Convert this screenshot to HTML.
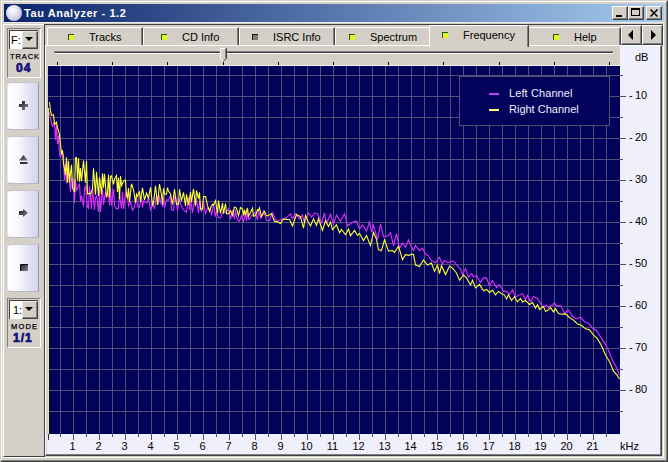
<!DOCTYPE html>
<html><head><meta charset="utf-8">
<style>
*{margin:0;padding:0;box-sizing:border-box}
html,body{width:668px;height:462px;overflow:hidden;background:#D4D0C8;font-family:"Liberation Sans",sans-serif;font-size:11px;color:#000}
.a{position:absolute}
.t{position:absolute;white-space:nowrap;line-height:13px}
</style></head><body>
<!-- window frame -->
<div class="a" style="left:0;top:0;width:668px;height:462px;border-top:1px solid #D4D0C8;border-left:1px solid #D4D0C8;border-right:1px solid #404040;border-bottom:1px solid #404040"></div>
<div class="a" style="left:1px;top:1px;width:666px;height:460px;border-top:1px solid #FFF;border-left:1px solid #FFF;border-right:1px solid #808080;border-bottom:1px solid #808080"></div>
<!-- title bar -->
<div class="a" style="left:4px;top:4px;width:660px;height:18px;background:linear-gradient(to right,#0A246A 0%,#A6CAF0 100%)"></div>
<div class="a" style="left:6px;top:5px;width:16px;height:16px;border-radius:50%;background:radial-gradient(circle at 40% 35%,#FFFFFF 0%,#E4E4F4 35%,#B8B8D8 80%,#9898C0 100%)"></div>
<div class="t" style="left:24px;top:7px;color:#fff;font-weight:bold;font-size:11px;letter-spacing:0.56px">Tau Analyzer - 1.2</div>
<!-- caption buttons -->
<div class="a" style="left:612px;top:6px;width:16px;height:14px;background:#D4D0C8;border-top:1px solid #fff;border-left:1px solid #fff;border-right:1px solid #404040;border-bottom:1px solid #404040;box-shadow:inset -1px -1px 0 #808080"></div>
<div class="a" style="left:616px;top:15px;width:6px;height:2px;background:#000"></div>
<div class="a" style="left:628px;top:6px;width:16px;height:14px;background:#D4D0C8;border-top:1px solid #fff;border-left:1px solid #fff;border-right:1px solid #404040;border-bottom:1px solid #404040;box-shadow:inset -1px -1px 0 #808080"></div>
<div class="a" style="left:631px;top:8px;width:9px;height:8px;border:1px solid #000;border-top-width:2px"></div>
<div class="a" style="left:646px;top:6px;width:16px;height:14px;background:#D4D0C8;border-top:1px solid #fff;border-left:1px solid #fff;border-right:1px solid #404040;border-bottom:1px solid #404040;box-shadow:inset -1px -1px 0 #808080"></div>
<svg class="a" style="left:646px;top:6px" width="16" height="14"><path d="M4.5 3.5 L11.5 10.5 M11.5 3.5 L4.5 10.5" stroke="#000" stroke-width="1.6"/></svg>

<!-- left panel -->
<div class="a" style="left:3px;top:24px;width:41px;height:433px;border-top:1px solid #fff;border-left:1px solid #fff;border-bottom:1px solid #404040"></div>
<div class="a" style="left:4px;top:22px;width:660px;height:1px;background:#ECECEC"></div>
<!-- group 1 -->
<div class="a" style="left:7px;top:28px;width:34px;height:50px;border-top:1px solid #808080;border-left:1px solid #808080;border-right:1px solid #fff;border-bottom:1px solid #fff"></div>
<div class="a" style="left:9px;top:30px;width:29px;height:19px;background:#fff;border-top:1px solid #404040;border-left:1px solid #404040"></div>
<div class="t" style="left:11px;top:34px">F:</div>
<div class="a" style="left:22px;top:31px;width:16px;height:18px;background:#D4D0C8;border-top:1px solid #E8E6E0;border-left:1px solid #E8E6E0;border-right:1px solid #404040;border-bottom:1px solid #404040;box-shadow:inset -1px -1px 0 #808080"></div>
<svg class="a" style="left:25px;top:37px" width="9" height="5"><path d="M0 0 H8 L4 4 Z" fill="#000"/></svg>
<div class="t" style="left:10px;top:50px;font-size:7.5px;letter-spacing:0.9px;-webkit-text-stroke:0.25px #000">TRACK</div>
<div class="t" style="left:16px;top:62px;font-size:12px;font-weight:bold;color:#10107A;letter-spacing:1px;-webkit-text-stroke:0.7px #10107A">04</div>
<!-- buttons -->
<div class="a" style="left:7px;top:82px;width:32px;height:48px;border:1px solid #C4C4D0;border-left-color:#E4E4EC;border-right-color:#9898B0;border-bottom-color:#B8B8C8;border-radius:4px 1px 1px 4px;background:linear-gradient(to right,#FFFFFF 0%,#FAFAFE 30%,#D2D2EC 100%)"></div>
<div class="a" style="left:7px;top:136px;width:32px;height:48px;border:1px solid #C4C4D0;border-left-color:#E4E4EC;border-right-color:#9898B0;border-bottom-color:#B8B8C8;border-radius:4px 1px 1px 4px;background:linear-gradient(to right,#FFFFFF 0%,#FAFAFE 30%,#D2D2EC 100%)"></div>
<div class="a" style="left:7px;top:190px;width:32px;height:48px;border:1px solid #C4C4D0;border-left-color:#E4E4EC;border-right-color:#9898B0;border-bottom-color:#B8B8C8;border-radius:4px 1px 1px 4px;background:linear-gradient(to right,#FFFFFF 0%,#FAFAFE 30%,#D2D2EC 100%)"></div>
<div class="a" style="left:7px;top:244px;width:32px;height:48px;border:1px solid #C4C4D0;border-left-color:#E4E4EC;border-right-color:#9898B0;border-bottom-color:#B8B8C8;border-radius:4px 1px 1px 4px;background:linear-gradient(to right,#FFFFFF 0%,#FAFAFE 30%,#D2D2EC 100%)"></div>
<svg class="a" style="left:0;top:0" width="46" height="300">
<defs><linearGradient id="ig" x1="0" y1="0" x2="1" y2="1"><stop offset="0" stop-color="#141420"/><stop offset="1" stop-color="#8A8A90"/></linearGradient></defs>
<path d="M19 104 H28 V107 H25 V110 H22 V107 H19 Z M22 101 H25 V104 H22 Z" fill="url(#ig)"/>
<path d="M19 160.5 L23.5 155 L28 160.5 Z" fill="url(#ig)"/>
<rect x="20" y="162" width="7.5" height="2" fill="#303038"/>
<path d="M19 211 H23 V209 L28 213 L23 217 V215 H19 Z" fill="url(#ig)"/>
<rect x="20" y="264" width="8" height="7" fill="url(#ig)"/>
<path d="M20.5 271 V264.5 H28" stroke="#101018" fill="none"/>
</svg>
<!-- group 2 -->
<div class="a" style="left:7px;top:298px;width:34px;height:50px;border-top:1px solid #808080;border-left:1px solid #808080;border-right:1px solid #fff;border-bottom:1px solid #fff"></div>
<div class="a" style="left:9px;top:300px;width:29px;height:19px;background:#fff;border-top:1px solid #404040;border-left:1px solid #404040"></div>
<div class="t" style="left:13px;top:304px">1:</div>
<div class="a" style="left:22px;top:301px;width:16px;height:18px;background:#D4D0C8;border-top:1px solid #E8E6E0;border-left:1px solid #E8E6E0;border-right:1px solid #404040;border-bottom:1px solid #404040;box-shadow:inset -1px -1px 0 #808080"></div>
<svg class="a" style="left:25px;top:307px" width="9" height="5"><path d="M0 0 H8 L4 4 Z" fill="#000"/></svg>
<div class="t" style="left:11px;top:320px;font-size:7.5px;letter-spacing:1.2px;-webkit-text-stroke:0.25px #000">MODE</div>
<div class="t" style="left:13px;top:332px;font-size:12px;font-weight:bold;color:#10107A;letter-spacing:1px;-webkit-text-stroke:0.7px #10107A">1/1</div>

<!-- tab control -->
<div class="a" style="left:44px;top:24px;width:1px;height:433px;background:#404040"></div>
<div class="a" style="left:44px;top:24px;width:620px;height:1px;background:#404040"></div>
<!-- panel -->
<div class="a" style="left:45px;top:45px;width:617px;height:411px;border-top:1px solid #fff;border-left:1px solid #fff;border-right:1px solid #404040;border-bottom:1px solid #404040;box-shadow:inset -1px -1px 0 #808080"></div>
<div class="a" style="left:3px;top:457px;width:661px;height:1px;background:#fff"></div>
<div class="a" style="left:663px;top:24px;width:1px;height:434px;background:#fff"></div>
<!-- tabs -->
<div id="tabs"></div>
<div class="a" style="left:47px;top:27px;width:96px;height:18px;background:#D4D0C8;border-top:1px solid #fff;border-left:1px solid #fff;border-right:1px solid #404040;border-top-left-radius:2px;box-shadow:inset -1px 0 0 #808080"></div>
<div class="a" style="left:68px;top:34px;width:6px;height:6px;background:#E4F420;border-top:1px solid #1E5A00;border-left:1px solid #1E5A00"></div>
<div class="t" style="left:89px;top:31px">Tracks</div>
<div class="a" style="left:143px;top:27px;width:96px;height:18px;background:#D4D0C8;border-top:1px solid #fff;border-left:1px solid #fff;border-right:1px solid #404040;border-top-left-radius:2px;box-shadow:inset -1px 0 0 #808080"></div>
<div class="a" style="left:161px;top:34px;width:6px;height:6px;background:#E4F420;border-top:1px solid #1E5A00;border-left:1px solid #1E5A00"></div>
<div class="t" style="left:182px;top:31px">CD Info</div>
<div class="a" style="left:239px;top:27px;width:96px;height:18px;background:#D4D0C8;border-top:1px solid #fff;border-left:1px solid #fff;border-right:1px solid #404040;border-top-left-radius:2px;box-shadow:inset -1px 0 0 #808080"></div>
<div class="a" style="left:252px;top:34px;width:6px;height:6px;background:#7C7C7C;border-top:1px solid #181818;border-left:1px solid #181818"></div>
<div class="t" style="left:273px;top:31px">ISRC Info</div>
<div class="a" style="left:335px;top:27px;width:96px;height:18px;background:#D4D0C8;border-top:1px solid #fff;border-left:1px solid #fff;border-right:1px solid #404040;border-top-left-radius:2px;box-shadow:inset -1px 0 0 #808080"></div>
<div class="a" style="left:349px;top:34px;width:6px;height:6px;background:#E4F420;border-top:1px solid #1E5A00;border-left:1px solid #1E5A00"></div>
<div class="t" style="left:370px;top:31px">Spectrum</div>
<div class="a" style="left:527px;top:27px;width:94px;height:18px;background:#D4D0C8;border-top:1px solid #fff;border-left:1px solid #fff;border-right:1px solid #404040;border-top-left-radius:2px;box-shadow:inset -1px 0 0 #808080"></div>
<div class="a" style="left:553px;top:34px;width:6px;height:6px;background:#E4F420;border-top:1px solid #1E5A00;border-left:1px solid #1E5A00"></div>
<div class="t" style="left:574px;top:31px">Help</div>
<div class="a" style="left:429px;top:25px;width:100px;height:22px;background:#D4D0C8;border-top:1px solid #fff;border-left:1px solid #fff;border-right:1px solid #404040;border-top-left-radius:2px;box-shadow:inset -1px 0 0 #808080"></div>
<div class="a" style="left:442px;top:32px;width:6px;height:6px;background:#E4F420;border-top:1px solid #1E5A00;border-left:1px solid #1E5A00"></div>
<div class="t" style="left:463px;top:29px">Frequency</div>
<!-- arrows -->
<div class="a" style="left:621px;top:25px;width:21px;height:20px;background:#D4D0C8;border-top:1px solid #fff;border-left:1px solid #fff;border-right:1px solid #404040;border-bottom:1px solid #404040;box-shadow:inset -1px -1px 0 #808080"></div>
<div class="a" style="left:642px;top:25px;width:21px;height:20px;background:#D4D0C8;border-top:1px solid #fff;border-left:1px solid #fff;border-right:1px solid #404040;border-bottom:1px solid #404040;box-shadow:inset -1px -1px 0 #808080"></div>
<svg class="a" style="left:621px;top:25px" width="42" height="20"><path d="M7 10 L12 5 V15 Z M35 10 L30 5 V15 Z" fill="#000"/></svg>

<!-- slider -->
<div class="a" style="left:54px;top:51px;width:559px;height:3px;border-top:1px solid #808080;border-left:1px solid #808080;border-bottom:1px solid #fff;background:#404040"></div>
<svg class="a" style="left:0;top:44px" width="668" height="24">
<path d="M220.5 14.5 V4.5 H226.5 V14.5 L223.5 16.5 Z" fill="#D4D0C8"/>
<path d="M223 17 L220.5 14.5 V4.5 H225.5" stroke="#fff" fill="none"/>
<path d="M226.5 4 V14.5 L223.5 17" stroke="#404040" fill="none"/>
<path d="M225.5 5 V14.5" stroke="#808080" fill="none"/>
<rect x="57" y="18" width="1" height="3" fill="#000"/>
<rect x="112" y="18" width="1" height="3" fill="#000"/>
<rect x="167" y="18" width="1" height="3" fill="#000"/>
<rect x="223" y="18" width="1" height="3" fill="#000"/>
<rect x="278" y="18" width="1" height="3" fill="#000"/>
<rect x="333" y="18" width="1" height="3" fill="#000"/>
<rect x="388" y="18" width="1" height="3" fill="#000"/>
<rect x="443" y="18" width="1" height="3" fill="#000"/>
<rect x="499" y="18" width="1" height="3" fill="#000"/>
<rect x="554" y="18" width="1" height="3" fill="#000"/>
<rect x="609" y="18" width="1" height="3" fill="#000"/>
</svg>

<!-- chart -->
<div class="a" style="left:620px;top:46px;width:40px;height:408px;background:#F0F0FC"></div>
<div class="a" style="left:47px;top:434px;width:613px;height:20px;background:#F0F0FC"></div>
<div class="a" style="left:47px;top:65px;width:573px;height:369px;background:#02025A;border-top:1px solid #F4F4FF;border-left:1px solid #D4D0C8"></div>
<svg class="a" style="left:0;top:0" width="668" height="462">
<rect x="60" y="66" width="1" height="371" fill="#505278"/>
<rect x="73" y="66" width="1" height="374" fill="#505278"/>
<rect x="86" y="66" width="1" height="371" fill="#505278"/>
<rect x="99" y="66" width="1" height="374" fill="#505278"/>
<rect x="112" y="66" width="1" height="371" fill="#505278"/>
<rect x="125" y="66" width="1" height="374" fill="#505278"/>
<rect x="138" y="66" width="1" height="371" fill="#505278"/>
<rect x="151" y="66" width="1" height="374" fill="#505278"/>
<rect x="164" y="66" width="1" height="371" fill="#505278"/>
<rect x="177" y="66" width="1" height="374" fill="#505278"/>
<rect x="190" y="66" width="1" height="371" fill="#505278"/>
<rect x="203" y="66" width="1" height="374" fill="#505278"/>
<rect x="216" y="66" width="1" height="371" fill="#505278"/>
<rect x="229" y="66" width="1" height="374" fill="#505278"/>
<rect x="242" y="66" width="1" height="371" fill="#505278"/>
<rect x="255" y="66" width="1" height="374" fill="#505278"/>
<rect x="268" y="66" width="1" height="371" fill="#505278"/>
<rect x="281" y="66" width="1" height="374" fill="#505278"/>
<rect x="294" y="66" width="1" height="371" fill="#505278"/>
<rect x="307" y="66" width="1" height="374" fill="#505278"/>
<rect x="320" y="66" width="1" height="371" fill="#505278"/>
<rect x="333" y="66" width="1" height="374" fill="#505278"/>
<rect x="346" y="66" width="1" height="371" fill="#505278"/>
<rect x="359" y="66" width="1" height="374" fill="#505278"/>
<rect x="372" y="66" width="1" height="371" fill="#505278"/>
<rect x="385" y="66" width="1" height="374" fill="#505278"/>
<rect x="398" y="66" width="1" height="371" fill="#505278"/>
<rect x="411" y="66" width="1" height="374" fill="#505278"/>
<rect x="424" y="66" width="1" height="371" fill="#505278"/>
<rect x="437" y="66" width="1" height="374" fill="#505278"/>
<rect x="450" y="66" width="1" height="371" fill="#505278"/>
<rect x="463" y="66" width="1" height="374" fill="#505278"/>
<rect x="476" y="66" width="1" height="371" fill="#505278"/>
<rect x="489" y="66" width="1" height="374" fill="#505278"/>
<rect x="502" y="66" width="1" height="371" fill="#505278"/>
<rect x="515" y="66" width="1" height="374" fill="#505278"/>
<rect x="528" y="66" width="1" height="371" fill="#505278"/>
<rect x="541" y="66" width="1" height="374" fill="#505278"/>
<rect x="554" y="66" width="1" height="371" fill="#505278"/>
<rect x="567" y="66" width="1" height="374" fill="#505278"/>
<rect x="580" y="66" width="1" height="371" fill="#505278"/>
<rect x="593" y="66" width="1" height="374" fill="#505278"/>
<rect x="606" y="66" width="1" height="371" fill="#505278"/>
<rect x="48" y="434" width="1" height="6" fill="#303040"/>
<rect x="48" y="75" width="575" height="1" fill="#505278"/>
<rect x="48" y="96" width="578" height="1" fill="#505278"/>
<rect x="48" y="117" width="575" height="1" fill="#505278"/>
<rect x="48" y="138" width="578" height="1" fill="#505278"/>
<rect x="48" y="159" width="575" height="1" fill="#505278"/>
<rect x="48" y="180" width="578" height="1" fill="#505278"/>
<rect x="48" y="201" width="575" height="1" fill="#505278"/>
<rect x="48" y="222" width="578" height="1" fill="#505278"/>
<rect x="48" y="243" width="575" height="1" fill="#505278"/>
<rect x="48" y="264" width="578" height="1" fill="#505278"/>
<rect x="48" y="285" width="575" height="1" fill="#505278"/>
<rect x="48" y="306" width="578" height="1" fill="#505278"/>
<rect x="48" y="327" width="575" height="1" fill="#505278"/>
<rect x="48" y="348" width="578" height="1" fill="#505278"/>
<rect x="48" y="369" width="575" height="1" fill="#505278"/>
<rect x="48" y="390" width="578" height="1" fill="#505278"/>
<rect x="48" y="411" width="575" height="1" fill="#505278"/>
<rect x="459.5" y="76.5" width="150" height="49" fill="#02025A" stroke="#505278"/>
<rect x="489" y="93" width="10" height="2" fill="#C040F0"/>
<rect x="489" y="109" width="10" height="2" fill="#FFFF80"/>
<rect x="48" y="108" width="1" height="326" fill="#F0F070"/>
<polyline points="49.5,112.3 51.5,123.3 52.5,126.2 54.5,121.9 55.5,140.0 56.5,125.0 57.5,144.2 58.5,135.6 59.5,154.7 60.5,156.7 62.5,152.7 63.5,154.9 64.5,180.0 65.5,164.4 66.5,183.1 67.5,168.9 68.5,170.1 70.5,192.1 71.5,178.1 73.5,179.3 74.5,203.2 75.5,179.6 76.5,190.2 78.5,185.9 79.5,183.6 80.5,201.5 81.5,195.9 83.5,206.4 84.5,189.3 85.5,185.3 87.5,207.0 88.5,208.2 89.5,186.3 91.5,209.1 92.5,187.0 94.5,210.0 95.5,197.8 96.5,196.0 97.5,201.4 98.5,211.9 99.5,189.7 100.5,212.0 102.5,188.3 103.5,204.6 105.5,191.8 106.5,197.1 108.5,194.3 109.5,205.4 110.5,187.9 111.5,205.7 113.5,188.9 114.5,205.6 116.5,208.8 118.5,208.4 119.5,194.2 120.5,201.9 121.5,208.4 122.5,191.7 123.5,209.0 125.5,192.6 127.5,194.1 128.5,205.8 130.5,202.1 132.5,210.2 134.5,206.8 136.5,196.3 137.5,206.7 139.5,207.2 141.5,197.8 142.5,207.6 143.5,201.0 145.5,202.6 147.5,202.7 148.5,196.0 150.5,210.7 152.5,201.6 154.5,208.8 156.5,194.8 158.5,203.7 159.5,195.4 160.5,202.4 162.5,206.0 163.5,198.1 164.5,207.8 166.5,199.9 168.5,200.2 170.5,195.3 171.5,209.7 173.5,210.2 174.5,196.9 175.5,195.9 177.5,210.8 179.5,198.5 180.5,204.2 182.5,208.3 184.5,210.9 186.5,212.2 188.5,197.5 189.5,209.8 190.5,197.9 192.5,213.0 194.5,200.3 195.5,206.5 196.5,199.3 198.5,212.7 199.5,200.9 201.5,211.9 203.5,201.9 205.5,213.6 207.5,208.1 209.5,209.4 210.5,208.2 211.5,215.5 213.5,203.7 215.5,216.7 216.5,211.7 218.5,217.6 220.5,217.9 222.5,212.9 224.5,212.2 226.5,212.1 228.5,208.7 230.5,219.3 232.5,210.2 234.5,219.2 235.5,209.8 236.5,216.6 238.5,221.0 239.5,221.2 241.5,215.6 243.5,221.1 245.5,212.6 246.5,221.3 247.5,211.6 248.5,219.1 249.5,219.3 251.5,215.3 253.5,214.2 255.5,212.4 257.5,220.2 258.5,210.4 260.5,218.1 263.5,210.6 266.5,220.2 269.5,220.7 272.5,212.7 276.5,221.3 280.5,219.7 284.5,218.5 287.5,216.6 290.5,213.7 292.5,218.9 295.5,213.8 299.5,218.9 302.5,215.0 304.5,222.8 308.5,213.0 311.5,217.1 314.5,213.0 317.5,213.5 321.5,223.0 324.5,213.1 326.5,223.3 330.5,214.4 333.5,224.2 336.5,215.0 340.5,221.2 344.5,213.8 347.5,225.8 351.5,223.0 354.5,221.5 356.5,221.1 359.5,229.0 362.5,225.0 366.5,231.1 369.5,221.8 371.5,232.0 373.5,225.2 377.5,239.5 380.5,223.8 383.5,236.7 387.5,235.9 390.5,232.7 393.5,245.8 396.5,233.7 399.5,248.3 402.5,243.2 405.5,247.3 408.5,239.9 410.5,245.1 413.5,250.4 415.5,245.3 419.5,250.7 422.5,248.2 425.5,254.0 428.5,255.8 431.5,260.7 435.5,262.8 439.5,257.3 442.5,264.1 444.5,260.4 447.5,262.6 450.5,261.7 453.5,261.0 457.5,265.9 460.5,269.2 462.5,274.4 465.5,268.6 468.5,277.1 471.5,273.4 473.5,276.7 476.5,275.7 480.5,282.4 483.5,277.7 486.5,278.1 489.5,285.8 492.5,280.5 496.5,287.5 499.5,284.6 503.5,291.2 506.5,291.4 509.5,294.5 512.5,290.0 515.5,297.0 518.5,295.2 522.5,293.6 525.5,299.8 527.5,295.4 530.5,301.5 533.5,296.4 537.5,298.5 540.5,303.3 542.5,307.0 546.5,305.2 548.5,307.5 552.5,304.9 554.5,302.9 556.5,306.1 560.5,305.3 564.5,313.2 568.5,310.0 572.5,316.5 576.5,318.7 580.5,317.2 584.5,321.7 588.5,323.1 592.5,328.0 596.5,330.7 600.5,336.7 604.5,342.9 608.5,350.2 612.5,360.5 616.5,367.6 619.5,375.0" fill="none" stroke="#E030F8" stroke-width="1.1"/>
<polyline points="49.5,102.0 50.5,111.0 51.5,115.2 53.5,114.7 54.5,124.4 56.5,122.1 57.5,127.6 59.5,134.7 61.5,154.0 62.5,150.2 63.5,163.6 65.5,174.6 66.5,157.3 67.5,182.7 68.5,160.9 69.5,182.7 71.5,164.7 72.5,187.8 74.5,192.0 75.5,157.8 76.5,157.7 77.5,180.2 78.5,157.9 79.5,181.8 80.5,168.0 81.5,181.1 83.5,160.5 85.5,182.7 86.5,160.8 87.5,194.0 89.5,193.2 90.5,194.2 92.5,188.9 93.5,168.2 95.5,194.7 96.5,172.0 98.5,195.9 99.5,177.3 101.5,194.3 102.5,173.2 103.5,187.7 104.5,173.7 106.5,197.2 107.5,193.3 108.5,174.6 109.5,197.5 110.5,176.7 111.5,175.8 113.5,184.3 114.5,179.0 116.5,175.6 117.5,191.9 118.5,177.9 119.5,199.1 120.5,176.0 121.5,185.7 123.5,181.2 125.5,179.9 126.5,195.8 127.5,197.9 128.5,188.0 129.5,202.0 131.5,183.8 133.5,189.6 135.5,202.9 136.5,194.2 137.5,196.2 139.5,191.2 140.5,201.7 142.5,187.9 144.5,200.1 146.5,193.2 148.5,198.0 150.5,187.4 152.5,205.0 153.5,202.9 155.5,185.8 157.5,204.9 159.5,184.0 161.5,194.9 162.5,204.1 163.5,188.2 164.5,194.0 166.5,194.4 167.5,187.6 168.5,191.1 170.5,193.9 172.5,204.5 174.5,189.2 176.5,204.4 178.5,203.8 179.5,189.3 181.5,201.0 183.5,192.4 185.5,206.0 186.5,194.4 187.5,199.7 188.5,204.9 190.5,192.1 191.5,202.1 193.5,188.9 195.5,205.4 196.5,190.3 198.5,198.6 199.5,192.4 200.5,209.3 202.5,208.9 203.5,196.6 205.5,196.6 207.5,205.4 209.5,211.4 210.5,207.7 212.5,204.4 213.5,205.2 215.5,200.6 217.5,213.2 218.5,200.6 220.5,213.5 222.5,203.1 223.5,213.6 225.5,203.5 226.5,213.9 228.5,213.8 230.5,210.6 232.5,215.4 234.5,207.1 236.5,208.2 238.5,215.6 240.5,207.5 242.5,209.0 243.5,215.5 244.5,209.5 245.5,215.1 247.5,208.0 248.5,216.3 250.5,212.5 252.5,208.2 253.5,216.2 255.5,215.6 257.5,209.7 258.5,210.4 259.5,208.1 261.5,216.7 264.5,211.4 266.5,215.9 269.5,214.9 271.5,213.6 274.5,221.4 277.5,221.9 280.5,223.5 283.5,219.0 286.5,219.4 289.5,219.5 292.5,226.0 296.5,214.6 300.5,216.7 303.5,228.1 305.5,215.5 308.5,222.5 310.5,226.0 313.5,218.8 316.5,225.4 318.5,218.5 322.5,230.4 325.5,220.6 328.5,226.4 330.5,222.2 332.5,229.6 336.5,224.8 339.5,232.7 341.5,229.4 345.5,234.8 348.5,229.0 350.5,235.7 354.5,230.5 357.5,235.3 359.5,233.3 363.5,240.6 366.5,235.5 370.5,245.5 373.5,232.5 376.5,239.3 378.5,249.8 381.5,250.6 384.5,239.8 388.5,251.1 392.5,250.5 394.5,252.4 398.5,246.3 402.5,259.6 405.5,254.6 409.5,255.4 411.5,254.1 413.5,254.4 415.5,265.0 419.5,266.5 423.5,259.9 427.5,265.0 431.5,263.1 434.5,271.4 437.5,265.1 439.5,273.5 441.5,265.7 445.5,274.6 449.5,266.3 452.5,268.1 456.5,273.0 459.5,280.2 463.5,275.0 466.5,277.9 470.5,285.1 472.5,280.2 475.5,287.9 479.5,284.4 483.5,290.8 486.5,289.4 489.5,292.4 492.5,290.1 495.5,294.9 498.5,291.4 501.5,293.7 504.5,295.1 506.5,298.9 508.5,294.8 511.5,300.6 514.5,296.7 517.5,301.9 520.5,298.4 522.5,302.1 525.5,300.4 529.5,304.5 532.5,302.6 535.5,308.1 537.5,304.7 539.5,309.5 543.5,306.3 545.5,311.4 547.5,310.6 550.5,307.6 553.5,311.9 555.5,308.6 558.5,313.6 561.5,314.2 565.5,313.9 569.5,317.5 573.5,320.1 577.5,323.9 581.5,325.3 585.5,328.8 589.5,329.7 593.5,335.1 597.5,338.7 601.5,345.8 605.5,355.0 609.5,361.4 613.5,371.2 617.5,375.7 619.5,379.0" fill="none" stroke="#FFFF30" stroke-width="1.1"/>
</svg>
<div class="t" style="left:509px;top:87px;color:#F0F0FF;letter-spacing:0.1px">Left Channel</div>
<div class="t" style="left:509px;top:103px;color:#F0F0FF;letter-spacing:0px">Right Channel</div>
<div class="t" style="left:57.5px;top:440px;width:30px;text-align:center">1</div>
<div class="t" style="left:83.5px;top:440px;width:30px;text-align:center">2</div>
<div class="t" style="left:109.5px;top:440px;width:30px;text-align:center">3</div>
<div class="t" style="left:135.5px;top:440px;width:30px;text-align:center">4</div>
<div class="t" style="left:161.5px;top:440px;width:30px;text-align:center">5</div>
<div class="t" style="left:187.5px;top:440px;width:30px;text-align:center">6</div>
<div class="t" style="left:213.5px;top:440px;width:30px;text-align:center">7</div>
<div class="t" style="left:239.5px;top:440px;width:30px;text-align:center">8</div>
<div class="t" style="left:265.5px;top:440px;width:30px;text-align:center">9</div>
<div class="t" style="left:291.5px;top:440px;width:30px;text-align:center">10</div>
<div class="t" style="left:317.5px;top:440px;width:30px;text-align:center">11</div>
<div class="t" style="left:343.5px;top:440px;width:30px;text-align:center">12</div>
<div class="t" style="left:369.5px;top:440px;width:30px;text-align:center">13</div>
<div class="t" style="left:395.5px;top:440px;width:30px;text-align:center">14</div>
<div class="t" style="left:421.5px;top:440px;width:30px;text-align:center">15</div>
<div class="t" style="left:447.5px;top:440px;width:30px;text-align:center">16</div>
<div class="t" style="left:473.5px;top:440px;width:30px;text-align:center">17</div>
<div class="t" style="left:499.5px;top:440px;width:30px;text-align:center">18</div>
<div class="t" style="left:525.5px;top:440px;width:30px;text-align:center">19</div>
<div class="t" style="left:551.5px;top:440px;width:30px;text-align:center">20</div>
<div class="t" style="left:577.5px;top:440px;width:30px;text-align:center">21</div>
<div class="t" style="left:620px;top:440px">kHz</div>
<div class="t" style="left:635px;top:51px">dB</div>
<div class="t" style="left:629px;top:89px">-</div>
<div class="t" style="left:635px;top:89px">10</div>
<div class="t" style="left:629px;top:131px">-</div>
<div class="t" style="left:635px;top:131px">20</div>
<div class="t" style="left:629px;top:173px">-</div>
<div class="t" style="left:635px;top:173px">30</div>
<div class="t" style="left:629px;top:215px">-</div>
<div class="t" style="left:635px;top:215px">40</div>
<div class="t" style="left:629px;top:257px">-</div>
<div class="t" style="left:635px;top:257px">50</div>
<div class="t" style="left:629px;top:299px">-</div>
<div class="t" style="left:635px;top:299px">60</div>
<div class="t" style="left:629px;top:341px">-</div>
<div class="t" style="left:635px;top:341px">70</div>
<div class="t" style="left:629px;top:383px">-</div>
<div class="t" style="left:635px;top:383px">80</div>
</body></html>
